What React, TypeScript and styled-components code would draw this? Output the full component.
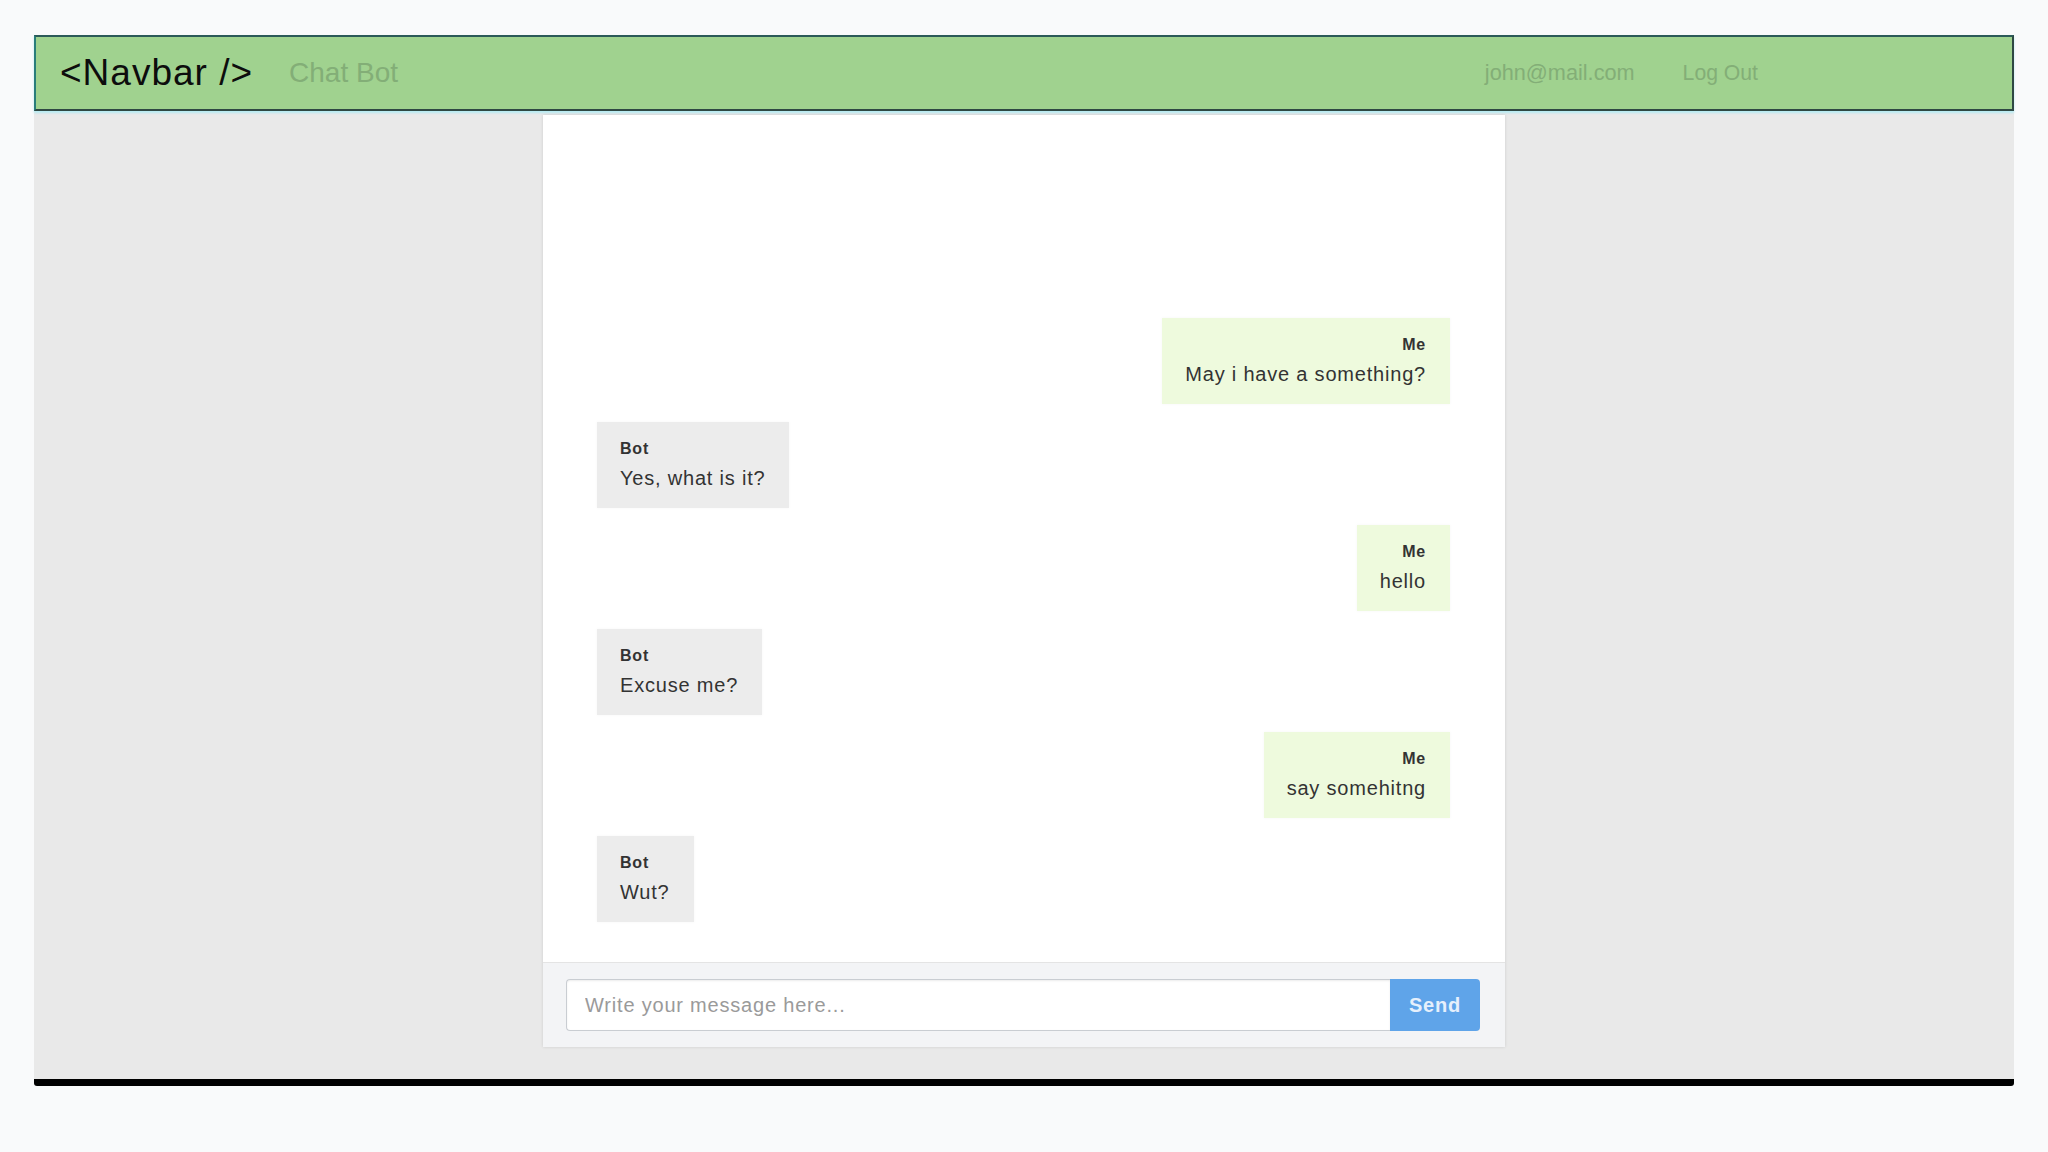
import React from "react";
import styled, { createGlobalStyle } from "styled-components";

const GlobalStyle = createGlobalStyle`
  html, body {
    margin: 0;
    padding: 0;
    background: #f9fafb;
    font-family: "Liberation Sans", Arial, Helvetica, sans-serif;
  }
  * { box-sizing: border-box; }
`;

const Page = styled.div`
  padding: 35px 34px 0;
  min-height: 1152px;
`;

const Frame = styled.div`
  display: flex;
  flex-direction: column;
  border-bottom: 7px solid #000;
  border-radius: 0 0 3px 3px;
  box-shadow: 0 -2px 3px rgba(0, 0, 0, 0.25) inset;
`;

const Navbar = styled.nav`
  height: 76px;
  display: flex;
  align-items: center;
  background: #a0d28f;
  border: 2px solid #2f4843;
  border-left-color: #2a7d7a;
  border-top-color: #2c5a58;
  box-shadow: 0 2px 2px rgba(170, 235, 245, 0.8);
  padding: 0 254px 0 24px;
  position: relative;
  z-index: 1;
`;

const Brand = styled.div`
  font-size: 37px;
  letter-spacing: 1px;
  color: #0d0d0d;
  margin-right: 36px;
`;

const NavLink = styled.a<{ $size: number }>`
  font-size: ${(p) => p.$size}px;
  color: #83ae77;
  text-decoration: none;
  cursor: pointer;
`;

const NavRight = styled.div`
  margin-left: auto;
  display: flex;
  align-items: center;
  gap: 48px;
`;

const Content = styled.main`
  height: 968px;
  background: #e9e9e9;
  display: flex;
  justify-content: center;
`;

const ChatPanel = styled.section`
  width: 962px;
  height: 932px;
  margin-top: 4px;
  display: flex;
  flex-direction: column;
  background: #fff;
  box-shadow: 0 0 3px rgba(0, 0, 0, 0.12);
`;

const Messages = styled.div`
  flex: 1;
  display: flex;
  flex-direction: column;
  justify-content: flex-end;
  gap: 17.6px;
  padding: 0 55px 40px 54px;
`;

const Bubble = styled.div<{ $me: boolean }>`
  align-self: ${(p) => (p.$me ? "flex-end" : "flex-start")};
  text-align: ${(p) => (p.$me ? "right" : "left")};
  background: ${(p) => (p.$me ? "#eefadd" : "#ececec")};
  height: 86px;
  padding: 16px 24px 16px 23px;
  color: #333;
  letter-spacing: 0.8px;
  box-shadow: 0 0 3px rgba(0, 0, 0, 0.04);
`;

const Sender = styled.div`
  font-size: 16px;
  line-height: 22px;
  font-weight: bold;
`;

const Text = styled.div`
  font-size: 20px;
  line-height: 28px;
  margin-top: 4px;
`;

const InputBar = styled.form`
  height: 85px;
  background: #f3f4f6;
  border-top: 1px solid #e4e4e4;
  display: flex;
  align-items: center;
  padding: 0 25px 0 23px;
`;

const MessageInput = styled.input`
  flex: 1;
  height: 52px;
  border: 1px solid #c9cdd2;
  border-right: none;
  border-radius: 4px 0 0 4px;
  background: #fff;
  box-shadow: inset 0 1px 2px rgba(0, 0, 0, 0.08);
  padding: 0 18px;
  font-family: "Liberation Sans", Arial, sans-serif;
  font-size: 20px;
  letter-spacing: 0.8px;
  color: #333;
  outline: none;
  &::placeholder {
    color: #9a9a9a;
  }
`;

const SendButton = styled.button`
  width: 90px;
  height: 52px;
  border: none;
  border-radius: 0 4px 4px 0;
  background: #5fa4e9;
  color: #e6f0fc;
  font-family: "Liberation Sans", Arial, sans-serif;
  font-size: 20px;
  font-weight: bold;
  letter-spacing: 0.8px;
  cursor: pointer;
`;

const messages = [
  { me: true, text: "May i have a something?" },
  { me: false, text: "Yes, what is it?" },
  { me: true, text: "hello" },
  { me: false, text: "Excuse me?" },
  { me: true, text: "say somehitng" },
  { me: false, text: "Wut?" },
];

export default function App() {
  return (
    <>
      <GlobalStyle />
      <Page>
        <Frame>
          <Navbar>
            <Brand>&lt;Navbar /&gt;</Brand>
            <NavLink $size={28}>Chat Bot</NavLink>
            <NavRight>
              <NavLink $size={21.7}>john@mail.com</NavLink>
              <NavLink $size={21.2}>Log Out</NavLink>
            </NavRight>
          </Navbar>
          <Content>
            <ChatPanel>
              <Messages>
                {messages.map((m, i) => (
                  <Bubble key={i} $me={m.me}>
                    <Sender>{m.me ? "Me" : "Bot"}</Sender>
                    <Text>{m.text}</Text>
                  </Bubble>
                ))}
              </Messages>
              <InputBar onSubmit={(e) => e.preventDefault()}>
                <MessageInput placeholder="Write your message here..." />
                <SendButton type="submit">Send</SendButton>
              </InputBar>
            </ChatPanel>
          </Content>
        </Frame>
      </Page>
    </>
  );
}
